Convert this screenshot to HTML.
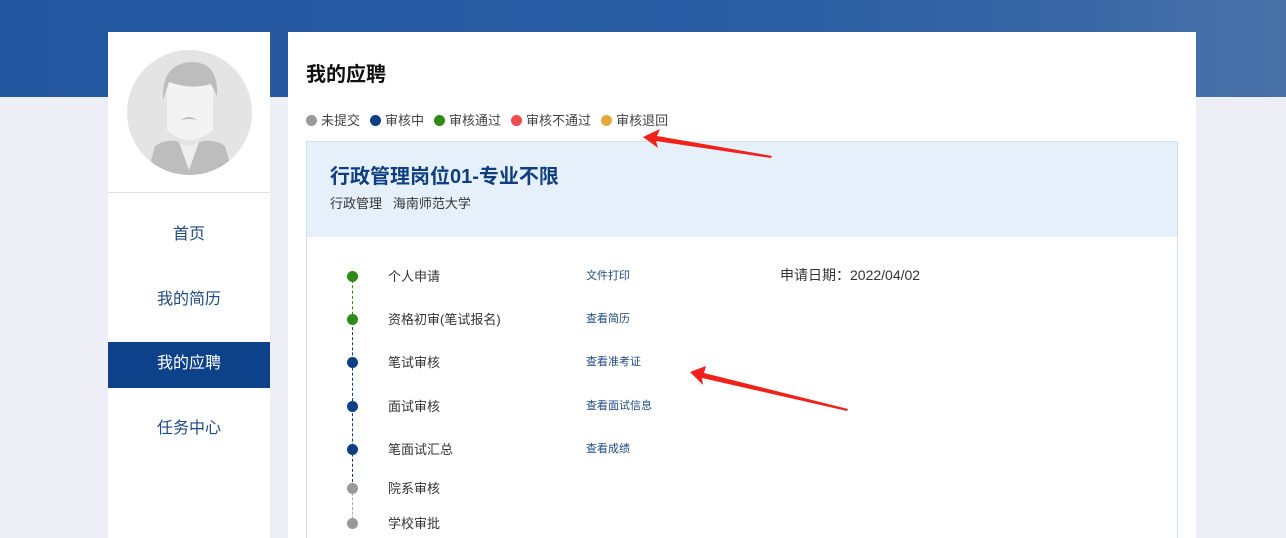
<!DOCTYPE html>
<html><head><meta charset="utf-8"><style>
*{margin:0;padding:0;box-sizing:border-box}
html,body{width:1286px;height:538px;overflow:hidden}
body{background:#edeef6;font-family:"Liberation Sans","Noto Sans CJK SC",sans-serif;position:relative}
.hdr{position:absolute;left:0;top:0;width:1286px;height:97px;background:linear-gradient(90deg,#2357a0 0%,#2a5da4 60%,#3a68a6 85%,#4a72a8 100%)}
.side{position:absolute;left:108px;top:32px;width:162px;height:506px;background:#fff}
.av{height:161px;border-bottom:1px solid #e2e2e2;position:relative}
.av .c{position:absolute;left:19px;top:18px;width:125px;height:125px;border-radius:50%;background:#e4e4e4;overflow:hidden}
.nav{position:absolute;left:0;width:162px;height:46px;line-height:44px;text-align:center;font-size:16px;color:#1f4a80}
.nav.on{background:#0d4189;color:#fff}
.main{position:absolute;left:288px;top:32px;width:908px;height:506px;background:#fff;overflow:hidden}
h1{position:absolute;left:18px;top:26px;font-size:20px;color:#111;font-weight:bold}
.leg{position:absolute;left:18px;top:78px;font-size:13px;color:#444;display:flex;gap:10px}
.leg span:before{content:"";display:inline-block;width:11px;height:11px;border-radius:50%;background:var(--c);margin-right:4px;vertical-align:-1px}
.card{position:absolute;left:18px;top:109px;width:872px;height:420px;border:1px solid #d9dee8}
.ch{height:95px;background:#e6f0fb}
.ch .t{position:absolute;left:23px;top:18px;font-size:20px;font-weight:bold;color:#0f3f80}
.ch .s{position:absolute;left:23px;top:51px;font-size:13px;color:#333}
.r{position:absolute;left:0;font-size:13px;color:#333}
.dot{position:absolute;left:40px;width:11px;height:11px;border-radius:50%}
.lb{position:absolute;left:81px;top:-2px;white-space:nowrap}
.ln{position:absolute;left:279px;top:-1px;font-size:11px;color:#1f4a80;white-space:nowrap}
.vl{position:absolute;left:45px;width:0;border-left:1px dashed}
</style></head><body>
<div class="hdr"></div>
<div class="side">
 <div class="av"><div class="c">
  <svg width="125" height="125" viewBox="0 0 125 125"><path d="M40 50 Q38 20 62 18 Q88 16 86 50 L86 80 Q62 100 40 80Z" fill="#f3f3f3"/><path d="M36 50 Q34 14 64 12 Q92 12 90 46 L84 34 Q64 40 42 32Z" fill="#bdbdbd"/><path d="M20 125 L28 96 Q40 88 52 92 L62 120 L72 92 Q86 88 98 96 L106 125Z" fill="#bdbdbd"/><path d="M52 92 L62 120 L72 92 Q62 100 52 92Z" fill="#eee"/><path d="M54 70 Q62 64 70 70 Q62 68 54 70Z" fill="#bbb"/></svg>
 </div></div>
 <div class="nav" style="top:181px">首页</div>
 <div class="nav" style="top:246px">我的简历</div>
 <div class="nav on" style="top:310px">我的应聘</div>
 <div class="nav" style="top:375px">任务中心</div>
</div>
<div class="main">
 <h1>我的应聘</h1>
 <div class="leg"><span style="--c:#999">未提交</span><span style="--c:#0d3f86">审核中</span><span style="--c:#2f8a17">审核通过</span><span style="--c:#ef4a4f">审核不通过</span><span style="--c:#e7a83a">审核退回</span></div>
 <div class="card">
  <div class="ch"><div class="t">行政管理岗位01-专业不限</div><div class="s">行政管理&nbsp;&nbsp;&nbsp;海南师范大学</div></div>
  <div class="vl" style="top:138px;height:40px;border-color:#2f8a17"></div>
  <div class="vl" style="top:180px;height:165px;border-color:#0d3f86"></div>
  <div class="vl" style="top:346px;height:36px;border-color:#aaa"></div>
  <div class="r" style="top:126px"><div class="dot" style="top:3px;background:#2f8a17"></div><div class="lb">个人申请</div><div class="ln">文件打印</div><div style="position:absolute;left:473px;top:-3px;font-size:14px;white-space:nowrap">申请日期：2022/04/02</div></div>
  <div class="r" style="top:169px"><div class="dot" style="top:3px;background:#2f8a17"></div><div class="lb">资格初审(笔试报名)</div><div class="ln">查看简历</div></div>
  <div class="r" style="top:212px"><div class="dot" style="top:3px;background:#0d3f86"></div><div class="lb">笔试审核</div><div class="ln">查看准考证</div></div>
  <div class="r" style="top:256px"><div class="dot" style="top:3px;background:#0d3f86"></div><div class="lb">面试审核</div><div class="ln">查看面试信息</div></div>
  <div class="r" style="top:299px"><div class="dot" style="top:3px;background:#0d3f86"></div><div class="lb">笔面试汇总</div><div class="ln">查看成绩</div></div>
  <div class="r" style="top:338px"><div class="dot" style="top:3px;background:#999"></div><div class="lb">院系审核</div></div>
  <div class="r" style="top:373px"><div class="dot" style="top:3px;background:#999"></div><div class="lb">学校审批</div></div>
 </div>
</div>
<svg style="position:absolute;left:0;top:0" width="1286" height="538">
 <polygon points="643,137 660,129 657,136 772,156 771,158 656,141 658,148" fill="#f0201a"/>
 <polygon points="690,372 706,366 704,373 848,409 847,411 702,378 703,385" fill="#f0201a"/>
</svg>
</body></html>
